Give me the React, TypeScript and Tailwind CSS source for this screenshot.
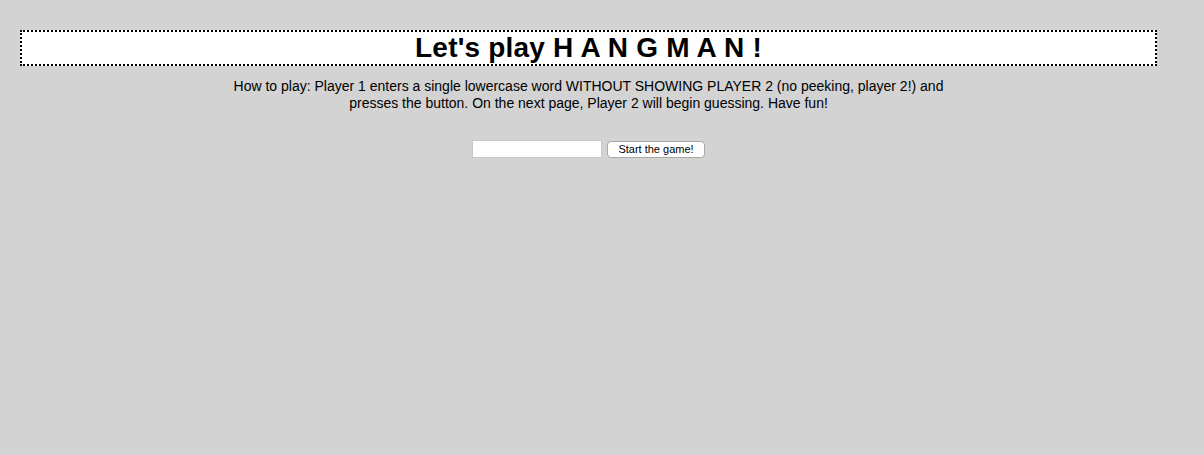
import React from 'react';

const App: React.FC = () => {
  return (
    <div className="min-h-screen bg-[#d3d3d3] font-['Liberation_Sans',Arial,sans-serif] text-black pt-[30px]">
      <div className="ml-[20px] w-[1137px] h-[36px] border-2 border-dotted border-black bg-white flex items-center justify-center">
        <h1 className="text-[28px] font-bold leading-none tracking-[0.2px]">Let's play H A N G M A N !</h1>
      </div>

      <div className="ml-[20px] w-[1137px] flex flex-col items-center">
        <p className="w-[730px] mt-[12px] text-center text-[14px] leading-[17px]">
          How to play: Player 1 enters a single lowercase word WITHOUT SHOWING PLAYER 2 (no peeking, player 2!) and presses the button. On the next page, Player 2 will begin guessing. Have fun!
        </p>

        <div className="mt-[28px] flex items-center gap-[5px]">
          <input type="text" className="w-[130px] h-[18px] bg-white border border-[#c8c8c8] outline-none" />
          <button className="h-[17px] px-[10px] bg-white border border-[#a8a8a8] rounded-[4px] text-[11px] leading-none">
            Start the game!
          </button>
        </div>
      </div>
    </div>
  );
};

export default App;
